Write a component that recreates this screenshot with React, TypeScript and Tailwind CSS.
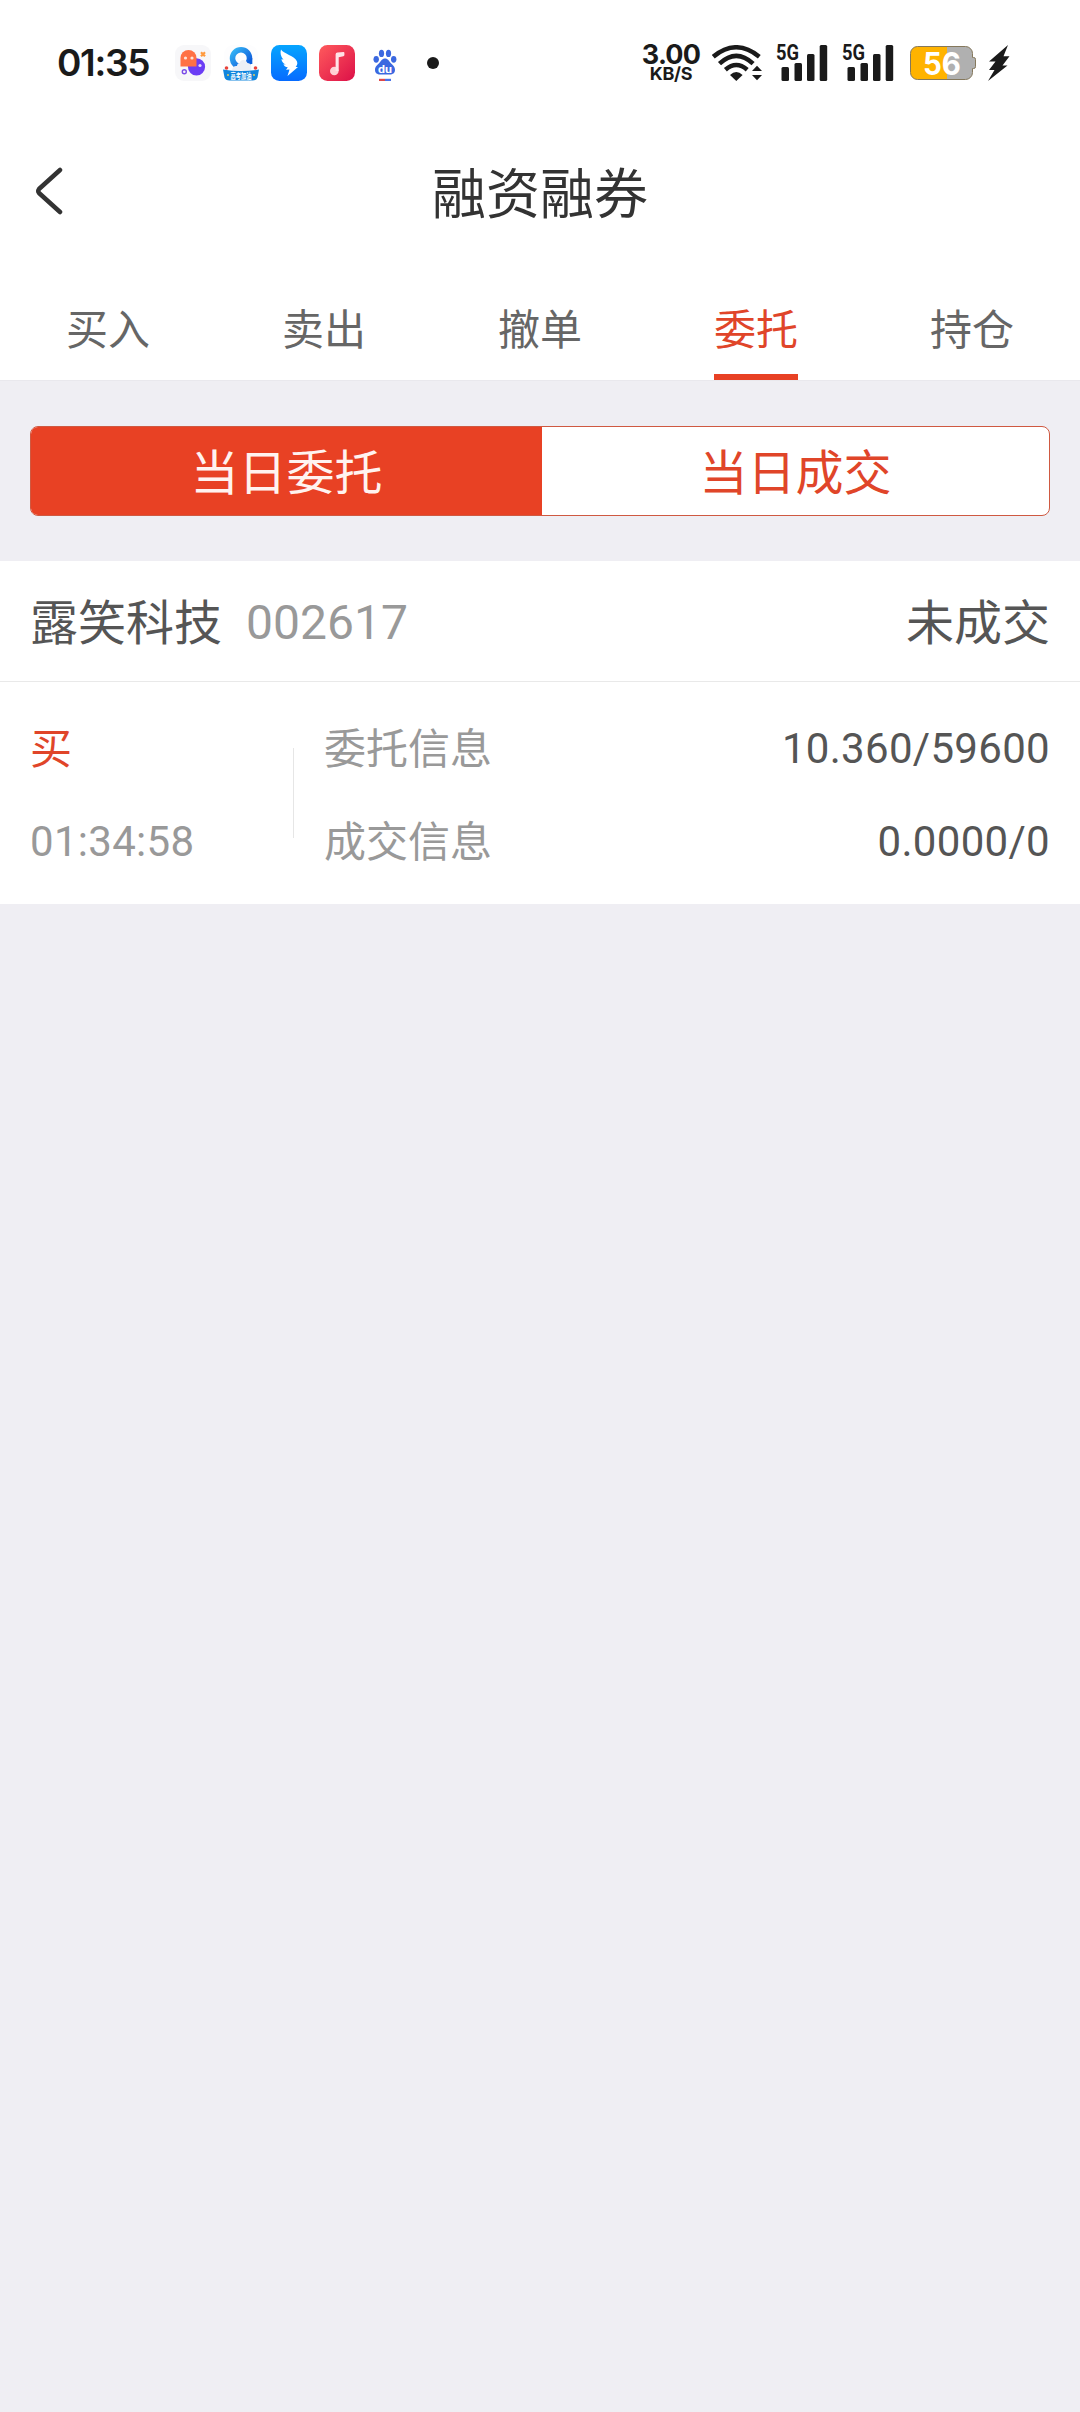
import { useState } from 'react';

const tabs = ['买入', '卖出', '撤单', '委托', '持仓'];
const segments = ['当日委托', '当日成交'];

const orders = [
    {
        name: '露笑科技',
        code: '002617',
        status: '未成交',
        side: '买',
        time: '01:34:58',
        entrust: '10.360/59600',
        deal: '0.0000/0',
    },
];

function ChatAppIcon() {
    return (
        <svg className="h-9 w-9" viewBox="0 0 36 36">
            <rect width="36" height="36" rx="9" fill="#f7f7f9" />
            <circle cx="21.5" cy="21.8" r="8.6" fill="#6b3df5" />
            <path d="M5.5 21.5V13a8 8 0 0 1 16 0v8.5z" fill="#ff7145" />
            <circle cx="10.5" cy="13" r="1.6" fill="#ffe3d8" />
            <circle cx="17" cy="13" r="1.6" fill="#ffe3d8" />
            <circle cx="25" cy="20.5" r="1.6" fill="#e3d8ff" />
            <path d="m26 7.3 4 4m0-4-4 4" stroke="#ff9a3d" strokeWidth="2.2" />
            <circle cx="9.3" cy="26.8" r="2" fill="none" stroke="#7a4be8" strokeWidth="1.4" />
        </svg>
    );
}

function BrowserAppIcon() {
    return (
        <svg className="h-9 w-9" viewBox="0 0 36 36">
            <defs>
                <linearGradient id="ring" x1="0" y1="0" x2="1" y2="1">
                    <stop offset="0" stopColor="#35b6f5" />
                    <stop offset="1" stopColor="#0a50d8" />
                </linearGradient>
            </defs>
            <rect x="1" width="34" height="34" rx="9" fill="#fdfdfe" />
            <circle cx="18" cy="13.300" r="8.500" fill="none" stroke="url(#ring)" strokeWidth="5.500" />
            <path d="M22 19h7.300v-6z" fill="#0a5fdd" />
            <path d="M9 25.500c0-3 2.500-5 5-4.500 0-2 1.500-3 3-3-.5-3 5.500-5 7.500 0 3 0 4.500 3 3.500 7.500z" fill="#eceff6" />
            <circle cx="3.500" cy="23" r="1.800" fill="#e8423a" />
            <circle cx="32.500" cy="23" r="1.800" fill="#e8423a" />
            <path d="M0 24.500q18 3 36 0l-1.500 8q-1 3-5 3h-23q-4 0-5-3z" fill="#1085dd" />
            <text x="7.500" y="33.500" textLength="21" lengthAdjust="spacingAndGlyphs" fontSize="7.500" fontWeight="700" fill="#fff">
                高考加油
            </text>
            <circle cx="5" cy="30" r="0.900" fill="#ffd34d" />
            <circle cx="31" cy="30" r="0.900" fill="#ffd34d" />
        </svg>
    );
}

function WingAppIcon() {
    return (
        <svg className="h-9 w-9" viewBox="0 0 36 36">
            <defs>
                <linearGradient id="wing" x1="0" y1="0" x2="0" y2="1">
                    <stop offset="0" stopColor="#06a5ff" />
                    <stop offset="1" stopColor="#066bff" />
                </linearGradient>
            </defs>
            <rect width="36" height="36" rx="8.500" fill="url(#wing)" />
            <path
                d="M10 4.500c2 4 14 6.500 16 12 1 2.500-.5 4.200-1.300 5.500h2.300L16.500 31l2-6.500-3.500.2 1.800-2.400c-2.500 0-4-1.500-4.300-3l2.300.3c-3-1.500-4.300-3.500-4.300-5.600l2 .8C9.500 11.500 9 7.500 10 4.500z"
                fill="#fff"
            />
        </svg>
    );
}

function MusicAppIcon() {
    return (
        <svg className="h-9 w-9" viewBox="0 0 36 36">
            <defs>
                <linearGradient id="music" x1="0" y1="0" x2="1" y2="1">
                    <stop offset="0" stopColor="#ff5a5c" />
                    <stop offset="1" stopColor="#dc1048" />
                </linearGradient>
            </defs>
            <rect width="36" height="36" rx="8.500" fill="url(#music)" />
            <circle cx="15.300" cy="26" r="4.300" fill="#ffd0d4" />
            <path d="M16.600 26V9.500q0-1.700 1.800-1.900l6.200-.6q.8 0 .8.900v2.200q0 1-1 1.200l-4.700 1V26z" fill="#ffe3e6" />
        </svg>
    );
}

function PawAppIcon() {
    return (
        <svg className="h-9 w-6" viewBox="0 0 24 36">
            <g fill="#3b68e0">
                <ellipse cx="3.200" cy="14.300" rx="2.700" ry="3.400" />
                <ellipse cx="8.500" cy="8.400" rx="2.600" ry="3.600" />
                <ellipse cx="15.500" cy="8.400" rx="2.600" ry="3.600" />
                <ellipse cx="20.700" cy="14.300" rx="2.700" ry="3.400" />
                <path d="M12 13.500c3 0 4 2.500 5.700 4.500 2 2.200 4.300 3.500 4.300 6.800 0 3.400-2.300 4.700-5 4.700H7c-2.700 0-5-1.300-5-4.700 0-3.300 2.300-4.600 4.300-6.800 1.700-2 2.700-4.500 5.700-4.500z" />
            </g>
            <text x="5" y="27.500" textLength="14" lengthAdjust="spacingAndGlyphs" fontSize="11" fontWeight="700" fill="#fff">
                du
            </text>
            <path d="M6 33.800h6v2.200H6z" fill="#e04848" />
            <path d="M12 33.800h6v2.200h-6z" fill="#4a72e8" />
        </svg>
    );
}

function WifiIcon() {
    return (
        <svg className="h-9 w-[50px]" viewBox="0 0 50 36">
            <g fill="none" stroke="#1a1a1a" strokeWidth="4.500">
                <path d="M1.300 11.700q22.700-18.800 46 0" />
                <path d="M7.500 18.700q16.800-15.600 33.600 0" />
                <path d="M13.400 24.700q10.900-9.400 21.800 0" />
            </g>
            <path d="M18 30q6.300-5.800 12.600 0l-6.300 6z" fill="#1a1a1a" />
            <path d="M40 26h10l-5-5.300zM40 30h10l-5 5.300z" fill="#1a1a1a" />
        </svg>
    );
}

function SignalIcon() {
    return (
        <svg className="h-[42px] w-[52px] overflow-visible" viewBox="0 0 52 42">
            <text x="0" y="17.500" textLength="23" lengthAdjust="spacingAndGlyphs" fontSize="22" fontWeight="700" fill="#1a1a1a" fontFamily="Roboto">
                5G
            </text>
            <g fill="#1a1a1a">
                <rect x="5.500" y="25" width="7.500" height="14" rx="1.500" />
                <rect x="18.500" y="21" width="7.500" height="18" rx="1.500" />
                <rect x="31" y="12" width="7.500" height="27" rx="1.500" />
                <rect x="43.700" y="3" width="7.500" height="36" rx="1.500" />
            </g>
        </svg>
    );
}

function BatteryIcon() {
    return (
        <svg className="h-[34px] w-[66px]" viewBox="0 0 66 34">
            <path d="M37 .5h18.500a7 7 0 0 1 7 7v4h1.200q1.800 0 1.800 1.800v7.400q0 1.800-1.800 1.800h-1.200v4a7 7 0 0 1-7 7H37z" fill="#b0b0b0" />
            <path d="M37 .5H7.500a7 7 0 0 0-7 7v19a7 7 0 0 0 7 7H37z" fill="#ffb300" />
            <path
                d="M7.500.5h48a7 7 0 0 1 7 7v4h1.200q1.800 0 1.800 1.800v7.400q0 1.800-1.800 1.800h-1.200v4a7 7 0 0 1-7 7h-48a7 7 0 0 1-7-7v-19a7 7 0 0 1 7-7z"
                fill="none"
                stroke="#85785c"
            />
            <text x="13" y="28.500" textLength="38" lengthAdjust="spacingAndGlyphs" fontSize="31" fontWeight="700" fill="#fff" fontFamily="Inter">
                56
            </text>
        </svg>
    );
}

function StatusBar() {
    return (
        <div className="flex h-[125px] items-center justify-between pl-[57px] pr-[70px] text-[#1a1a1a]">
            <div className="flex items-center">
                <div className="w-[118px] font-[Inter] text-[37px] leading-9 font-semibold tracking-[-1.3px]">01:35</div>
                <div className="flex items-center">
                    <ChatAppIcon />
                    <div className="ml-3"><BrowserAppIcon /></div>
                    <div className="ml-3"><WingAppIcon /></div>
                    <div className="ml-3"><MusicAppIcon /></div>
                    <div className="ml-[18px]"><PawAppIcon /></div>
                </div>
                <div className="ml-[30px] h-3 w-3 rounded-full bg-[#1a1a1a]" />
            </div>
            <div className="flex items-center">
                <div className="flex w-[58px] flex-col items-center font-[Inter]">
                    <span className="text-[27px] leading-[23px] font-bold tracking-[-0.8px]">3.00</span>
                    <span className="text-[18px] leading-4 font-bold tracking-[-0.3px]">KB/S</span>
                </div>
                <div className="ml-3"><WifiIcon /></div>
                <div className="ml-[14px]"><SignalIcon /></div>
                <div className="ml-[14px]"><SignalIcon /></div>
                <div className="ml-4"><BatteryIcon /></div>
                <svg className="ml-3 h-9 w-[22px]" viewBox="0 0 22 36" fill="#1a1a1a">
                    <path d="M20 0 1 16.500h6.500L1 25h5.500L0 36l19.500-15.500h-5L21.500 11.300h-6z" />
                </svg>
            </div>
        </div>
    );
}

export default function App() {
    const [tab, setTab] = useState(3);
    const [segment, setSegment] = useState(0);

    return (
        <div className="min-h-[2412px] w-[1080px] bg-[#efeef3] font-[Roboto,'Noto_Sans_CJK_SC',sans-serif]">
            <header className="bg-white">
                <StatusBar />
                <div className="grid h-[132px] grid-cols-3 items-center">
                    <button className="pl-[35px]">
                        <svg className="h-12 w-7" viewBox="0 0 28 48" fill="none" stroke="#333" strokeWidth="4.500" strokeLinecap="round" strokeLinejoin="round">
                            <path d="M25 3 4 22q-1.500 2 0 4L25 45" />
                        </svg>
                    </button>
                    <h1 className="pt-2.5 text-center text-[54px] leading-[60px] text-[#333]">融资融券</h1>
                </div>
                <nav className="flex h-[124px] border-b border-[#e9e8ed]">
                    {tabs.map((label, i) => (
                        <button key={label} onClick={() => setTab(i)} className="flex flex-1 justify-center">
                            <span
                                className={
                                    i === tab
                                        ? 'h-full border-b-6 border-[#e84124] pt-[50px] text-[42px] leading-[48px] text-[#e04529]'
                                        : 'h-full pt-[50px] text-[42px] leading-[48px] text-[#666]'
                                }
                            >
                                {label}
                            </span>
                        </button>
                    ))}
                </nav>
            </header>

            <div className="px-[30px] pt-[45px] pb-[45px]">
                <div className="grid h-[90px] grid-cols-[511px_1fr] overflow-hidden rounded-lg border border-[#cf5941] bg-white text-5xl">
                    {segments.map((label, i) => (
                        <button
                            key={label}
                            onClick={() => setSegment(i)}
                            className={i === segment ? 'bg-[#e84124] pt-1.5 text-[#fff3f0]' : 'pt-1.5 text-[#e04529]'}
                        >
                            {label}
                        </button>
                    ))}
                </div>
            </div>

            {orders.map((order) => (
                <section key={order.code} className="bg-white text-[#555]">
                    <div className="flex h-[121px] items-center justify-between border-b border-[#e9e9e9] px-[30px] pt-1 text-5xl">
                        <div className="flex items-center gap-6">
                            <span className="pt-0.5">{order.name}</span>
                            <span className="text-[#999]">{order.code}</span>
                        </div>
                        <span className="pt-0.5">{order.status}</span>
                    </div>
                    <div className="flex h-[222px] items-center px-[30px] text-[42px] leading-[48px]">
                        <div className="flex w-[263px] flex-col gap-11 pt-[5px]">
                            <span className="pt-px text-[#e04529]">{order.side}</span>
                            <span className="tracking-[0.3px] text-[#999]">{order.time}</span>
                        </div>
                        <div className="h-[90px] w-px bg-[#e6e6e6]" />
                        <div className="flex flex-1 flex-col gap-11 pt-1.5 pl-[30px]">
                            <div className="flex justify-between">
                                <span className="pt-px text-[#999]">委托信息</span>
                                <span className="tracking-[0.3px]">{order.entrust}</span>
                            </div>
                            <div className="flex justify-between">
                                <span className="pt-px text-[#999]">成交信息</span>
                                <span className="tracking-[0.3px]">{order.deal}</span>
                            </div>
                        </div>
                    </div>
                </section>
            ))}
        </div>
    );
}
